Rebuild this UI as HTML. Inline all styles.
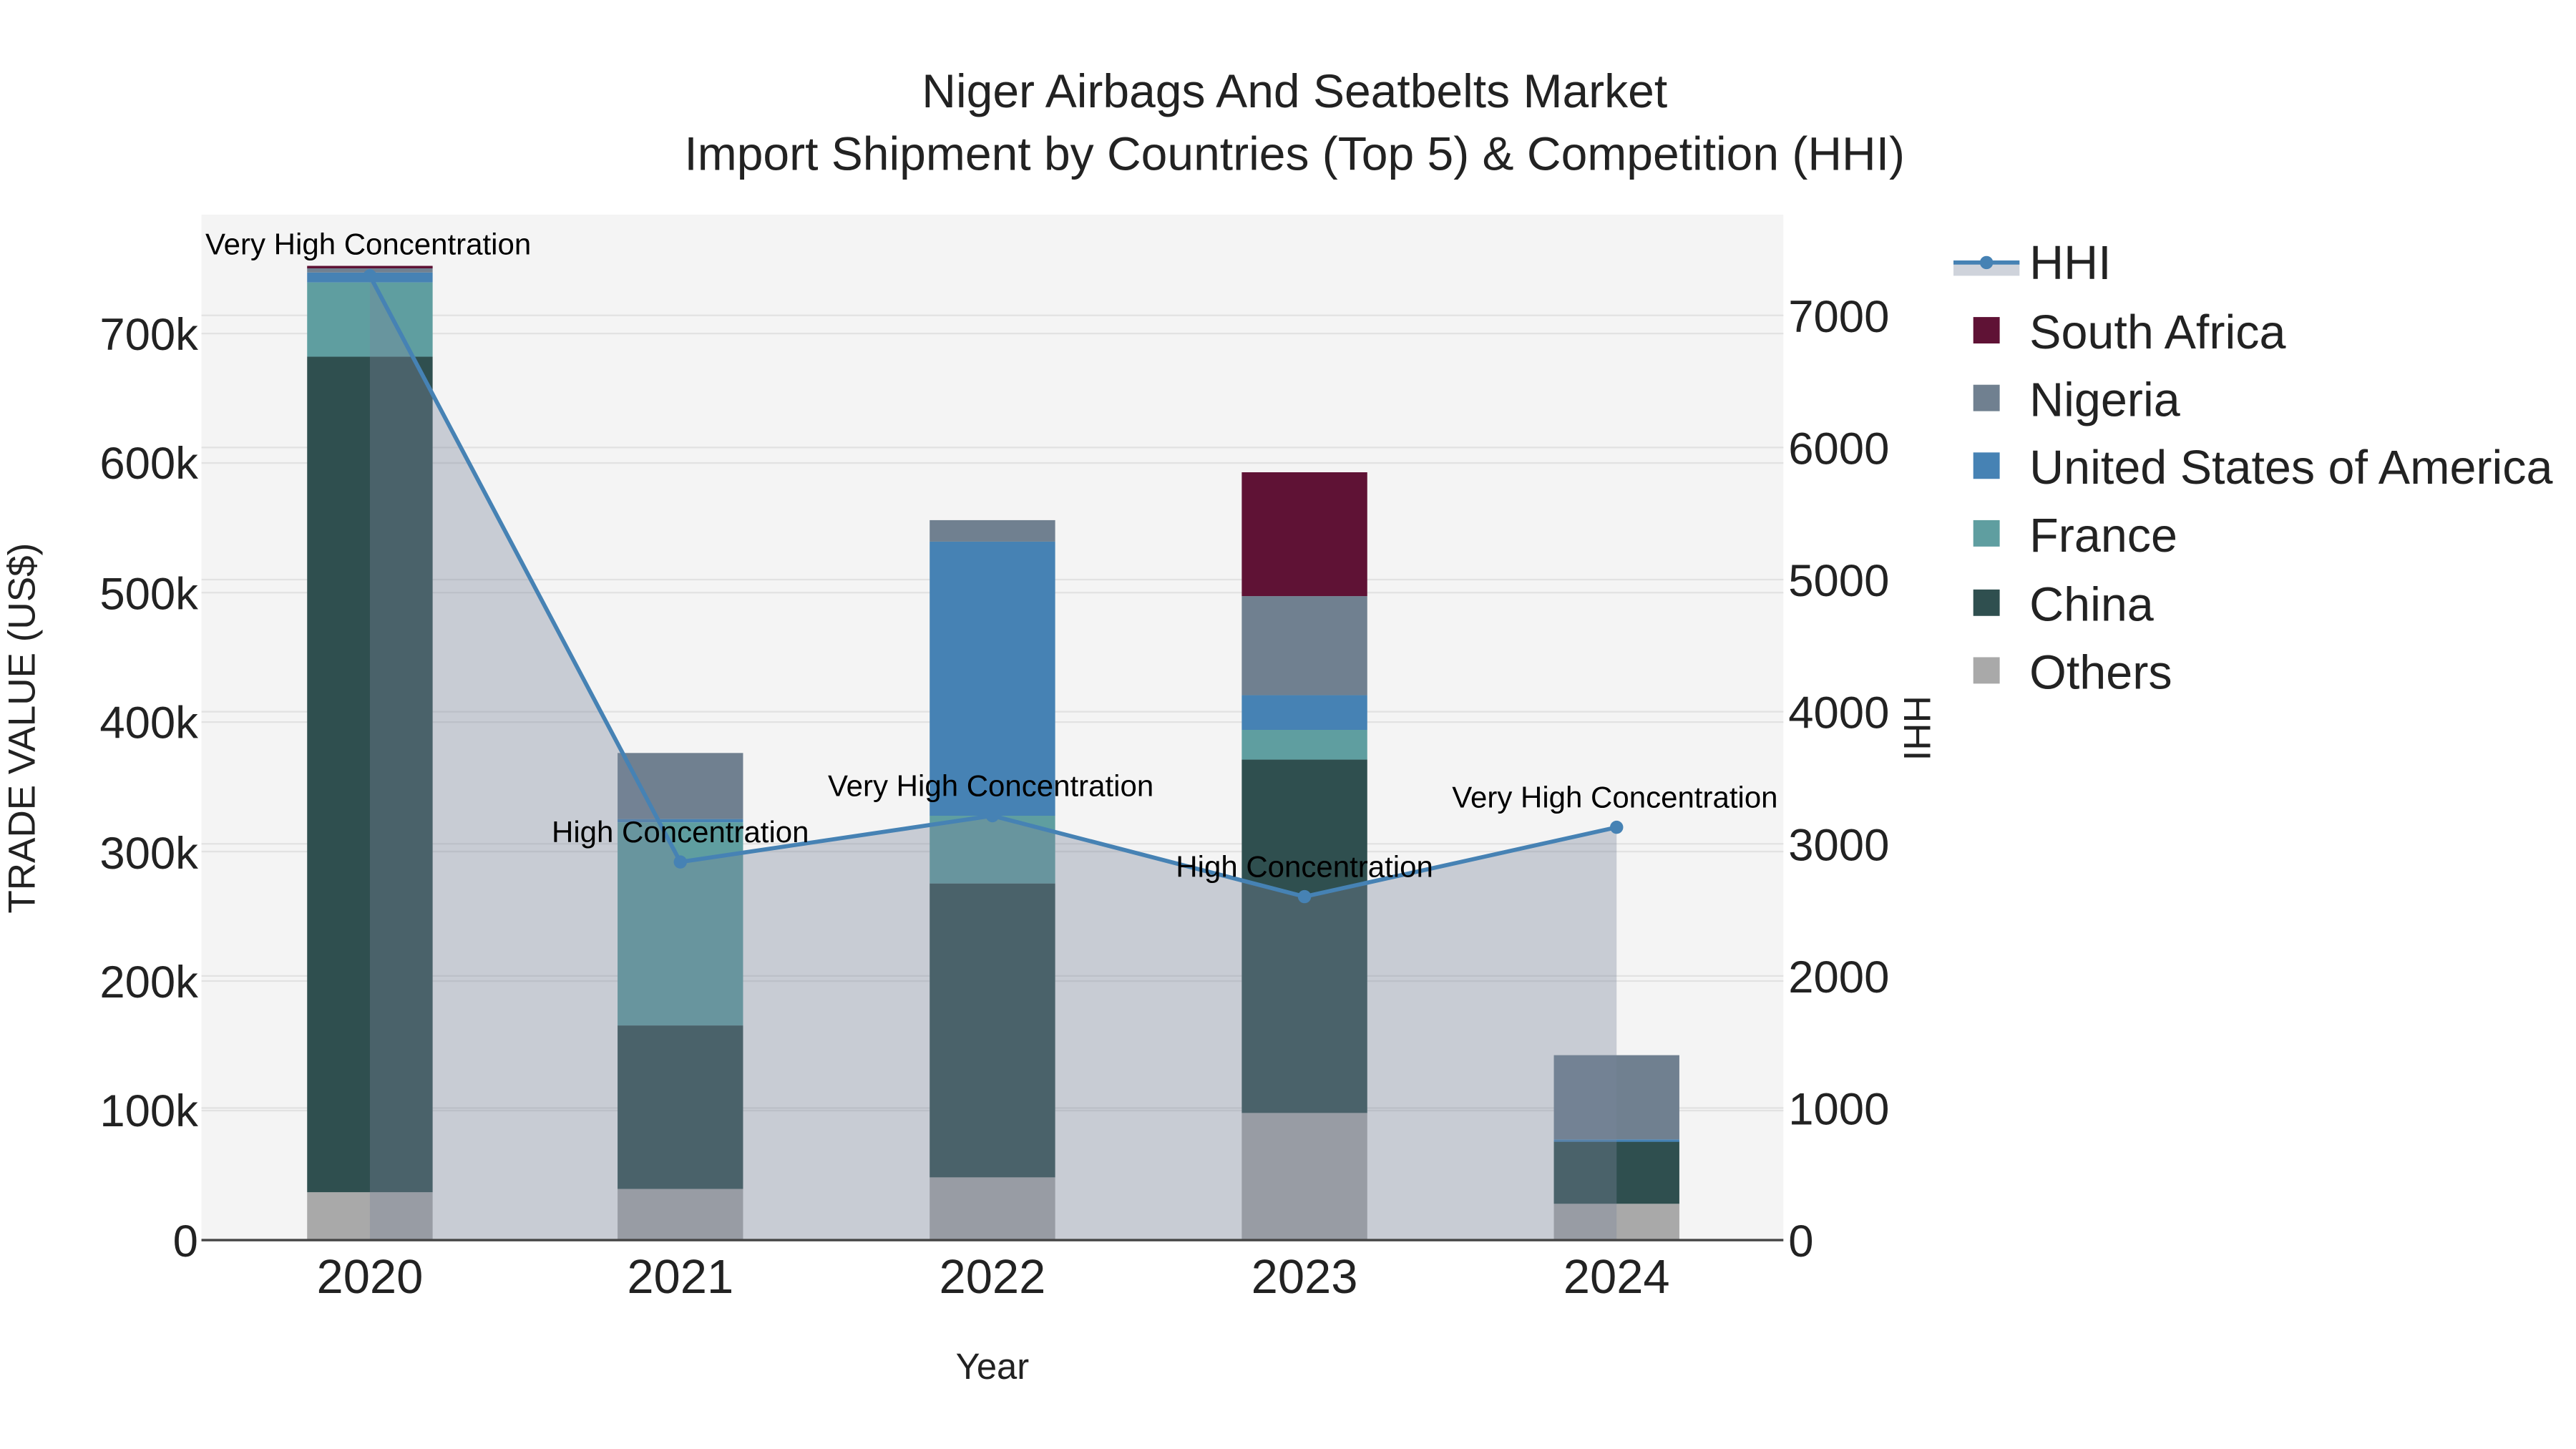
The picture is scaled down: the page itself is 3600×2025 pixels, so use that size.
<!DOCTYPE html>
<html><head><meta charset="utf-8"><style>html,body{margin:0;padding:0;background:#fff}svg{display:block}</style></head>
<body>
<svg width="3600" height="2025" viewBox="0 0 1560 877.5" xmlns="http://www.w3.org/2000/svg" font-family="Liberation Sans, sans-serif">
<rect width="1560" height="877.5" fill="#fff"/>
<rect x="122" y="130" width="958" height="621" fill="#f4f4f4"/>
<g stroke="#e2e2e2" stroke-width="1">
<line x1="122" x2="1080" y1="672.6" y2="672.6"/><line x1="122" x2="1080" y1="594.1" y2="594.1"/><line x1="122" x2="1080" y1="515.7" y2="515.7"/><line x1="122" x2="1080" y1="437.3" y2="437.3"/><line x1="122" x2="1080" y1="358.9" y2="358.9"/><line x1="122" x2="1080" y1="280.4" y2="280.4"/><line x1="122" x2="1080" y1="202" y2="202"/>
<line x1="122" x2="1080" y1="671" y2="671"/><line x1="122" x2="1080" y1="591" y2="591"/><line x1="122" x2="1080" y1="511" y2="511"/><line x1="122" x2="1080" y1="431" y2="431"/><line x1="122" x2="1080" y1="351" y2="351"/><line x1="122" x2="1080" y1="271" y2="271"/><line x1="122" x2="1080" y1="191" y2="191"/>
</g>
<g>
<rect x="186" y="722" width="76" height="29" fill="#a9a9a9"/><rect x="186" y="216" width="76" height="506" fill="#2f4f4f"/><rect x="186" y="171" width="76" height="45" fill="#5f9ea0"/><rect x="186" y="165" width="76" height="6" fill="#4682b4"/><rect x="186" y="162" width="76" height="3" fill="#708090"/><rect x="186" y="161" width="76" height="1.5" fill="#5f1235"/>
<rect x="374" y="720" width="76" height="31" fill="#a9a9a9"/><rect x="374" y="621" width="76" height="99" fill="#2f4f4f"/><rect x="374" y="498" width="76" height="123" fill="#5f9ea0"/><rect x="374" y="496" width="76" height="2" fill="#4682b4"/><rect x="374" y="456" width="76" height="40" fill="#708090"/>
<rect x="563" y="713" width="76" height="38" fill="#a9a9a9"/><rect x="563" y="535" width="76" height="178" fill="#2f4f4f"/><rect x="563" y="494" width="76" height="41" fill="#5f9ea0"/><rect x="563" y="328" width="76" height="166" fill="#4682b4"/><rect x="563" y="315" width="76" height="13" fill="#708090"/>
<rect x="752" y="674" width="76" height="77" fill="#a9a9a9"/><rect x="752" y="460" width="76" height="214" fill="#2f4f4f"/><rect x="752" y="442" width="76" height="18" fill="#5f9ea0"/><rect x="752" y="421" width="76" height="21" fill="#4682b4"/><rect x="752" y="361" width="76" height="60" fill="#708090"/><rect x="752" y="286" width="76" height="75" fill="#5f1235"/>
<rect x="941" y="729" width="76" height="22" fill="#a9a9a9"/><rect x="941" y="691" width="76" height="38" fill="#2f4f4f"/><rect x="941" y="690" width="76" height="1.5" fill="#4682b4"/><rect x="941" y="639" width="76" height="51" fill="#708090"/>
</g>
<polygon points="224,167 412,522 601,494 790,543 979,501 979,751 224,751" fill="rgb(122,134,156)" fill-opacity="0.36"/>
<polyline points="224,167 412,522 601,494 790,543 979,501" fill="none" stroke="#4682b4" stroke-width="2.5"/>
<g fill="#4682b4"><circle cx="224" cy="167" r="4"/><circle cx="412" cy="522" r="4"/><circle cx="601" cy="494" r="4"/><circle cx="790" cy="543" r="4"/><circle cx="979" cy="501" r="4"/></g>
<line x1="122" x2="1080" y1="751" y2="751" stroke="#444" stroke-width="1.5"/>
<g font-size="18.2" text-anchor="middle" fill="#000">
<text x="223" y="154">Very High Concentration</text>
<text x="412" y="510">High Concentration</text>
<text x="600" y="482">Very High Concentration</text>
<text x="790" y="531">High Concentration</text>
<text x="978" y="489">Very High Concentration</text>
</g>
<g font-size="27.5" fill="#222" text-anchor="end">
<text x="120" y="761">0</text><text x="120" y="682">100k</text><text x="120" y="604">200k</text><text x="120" y="526">300k</text><text x="120" y="447">400k</text><text x="120" y="369">500k</text><text x="120" y="290">600k</text><text x="120" y="212">700k</text>
</g>
<g font-size="27.5" fill="#222" text-anchor="start">
<text x="1083" y="761">0</text><text x="1083" y="681">1000</text><text x="1083" y="601">2000</text><text x="1083" y="521">3000</text><text x="1083" y="441">4000</text><text x="1083" y="361">5000</text><text x="1083" y="281">6000</text><text x="1083" y="201">7000</text>
</g>
<g font-size="29" fill="#222" text-anchor="middle">
<text x="224" y="783">2020</text><text x="412" y="783">2021</text><text x="601" y="783">2022</text><text x="790" y="783">2023</text><text x="979" y="783">2024</text>
</g>
<text x="601" y="835" font-size="22" text-anchor="middle" fill="#222">Year</text>
<text transform="translate(21,441) rotate(-90)" font-size="23" text-anchor="middle" fill="#222">TRADE VALUE (US$)</text>
<text transform="translate(1153,441) rotate(90)" font-size="23" text-anchor="middle" fill="#222">HHI</text>
<g font-size="28.6" text-anchor="middle" fill="#222">
<text x="784" y="65">Niger Airbags And Seatbelts Market</text>
<text x="784" y="103">Import Shipment by Countries (Top 5) &amp; Competition (HHI)</text>
</g>
<g>
<rect x="1183" y="159" width="40" height="8" fill="rgb(122,134,156)" fill-opacity="0.36"/>
<line x1="1183" x2="1223" y1="159" y2="159" stroke="#4682b4" stroke-width="2.5"/><circle cx="1203" cy="159" r="4" fill="#4682b4"/>
<rect x="1195" y="192" width="16" height="16" fill="#5f1235"/>
<rect x="1195" y="233" width="16" height="16" fill="#708090"/>
<rect x="1195" y="274" width="16" height="16" fill="#4682b4"/>
<rect x="1195" y="315" width="16" height="16" fill="#5f9ea0"/>
<rect x="1195" y="357" width="16" height="16" fill="#2f4f4f"/>
<rect x="1195" y="398" width="16" height="16" fill="#a9a9a9"/>
</g>
<g font-size="28.8" fill="#222">
<text x="1229" y="169">HHI</text>
<text x="1229" y="211">South Africa</text>
<text x="1229" y="252">Nigeria</text>
<text x="1229" y="293">United States of America</text>
<text x="1229" y="334">France</text>
<text x="1229" y="376">China</text>
<text x="1229" y="417">Others</text>
</g>
</svg>
</body></html>
